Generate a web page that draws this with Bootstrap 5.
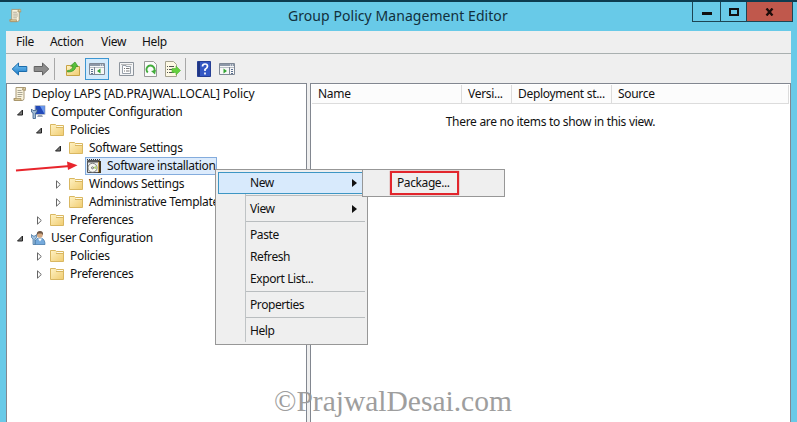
<!DOCTYPE html>
<html lang="en">
<head>
<meta charset="utf-8">
<meta name="viewport" content="width=device-width, initial-scale=1">
<title>Group Policy Management Editor</title>
<link href="https://cdn.jsdelivr.net/npm/bootstrap@5.3.0/dist/css/bootstrap.min.css" rel="stylesheet">
<style>
body{font-family:"Noto Sans","Open Sans",sans-serif;font-size:12px;line-height:18px;color:#111;background:#68cae8;letter-spacing:-.3px}
svg{display:block;flex:none}
.win{width:797px;height:422px;border-top:2px solid #0d3c50;padding:0 6px}
.titlebar{height:29px;padding-left:2px}
.title-ic{margin-top:6px}
.caption{font-size:14px;color:#12303c;letter-spacing:.06px;margin-left:265px;padding-bottom:1px}
.winbtns{width:101px;height:20px;margin-right:-2px;border:1px solid #1d4554;border-top:0}
.winbtns>div{border-right:1px solid #1d4554}
.winbtns>div:last-child{border:0;background:#c0584c}
.b1{width:28px}.b2{width:26px}
.menubar{height:23px;background:#efefef;border-bottom:1px solid #a9b0b0;padding:0 0 0 10px}
.toolbar{height:29px;background:#efefef;padding-left:5px}
.tsep{width:1px;height:22px;background:#a8a8a8}
.toggled{width:24px;height:22px;background:#d3eafb;border:1px solid #3c96d2}
.panes{height:339px;background:#efefef;gap:3px}
.tree{width:301px;background:#fff;border:1px solid #828790;border-bottom:0;padding:1px 0 0 5px}
.list-pane{background:#fff;border:1px solid #828790;border-bottom:0;padding:1px 1px 0 1px}
.node{height:18px;white-space:nowrap}
.root-lbl{letter-spacing:-.12px}
.node .tw{width:9px}
.node .ic{width:16px}
.node .tw+.ic{margin:0 5px 0 5px}
.root-ic{margin-right:4px}
.l2{padding-left:19px}.l3{padding-left:38px}.l4{padding-left:73px}
.picked{height:18px;width:132px;background:#dcebfc;border:1px solid #84acdd}
.picked span{margin-left:5px;letter-spacing:-.33px}
.cols{height:19px;border-bottom:1px solid #dcdcdc;background:#fcfcfc}
.cols>div{border-right:1px solid #dcdcdc;padding-left:6px}
.c1{width:150px}.c2{width:50px}.c3{width:100px}
.empty{padding-top:9px}
.ctx{left:215px;top:169px;width:153px;height:176px;background:#efefef;border:1px solid #979797;padding:2px;letter-spacing:-.42px}
.ctx .gutter{left:29px;top:24px;bottom:2px;width:1px;background:#bfc3c5}
.mi{height:22px;padding-left:32px;padding-right:8px}
.mi.on{background:#d8eafc;border:1px solid #3d96c4;padding-left:31px;padding-right:7px}
.ms{height:4px;padding:1px 0 0 28px}
.ms::before{content:"";display:block;height:1px;background:#b9bdbf}
.sub{left:362px;top:169px;width:143px;height:28px;background:#efefef;border:1px solid #979797;padding:1px 0 0 27px}
.hot{width:69px;height:24px;border:2px solid #e2252c;box-shadow:0 0 1px #b44;padding-left:5px;letter-spacing:-.4px}
.pointer{left:14px;top:157px}
.stamp{left:274px;top:382px;font:29.5px/38px "Liberation Serif",serif;color:#999;letter-spacing:0;opacity:.95;white-space:nowrap}
</style>
<script src="https://cdn.jsdelivr.net/npm/bootstrap@5.3.0/dist/js/bootstrap.bundle.min.js"></script>
</head>
<body class="overflow-hidden">
<svg width="0" height="0" class="position-absolute">
<defs>
<linearGradient id="gf" x2="1" y2="1"><stop stop-color="#fff2c4"/><stop offset="1" stop-color="#f0cc70"/></linearGradient>
<linearGradient id="gb" x2="0" y2="1"><stop stop-color="#7cc8f4"/><stop offset="1" stop-color="#1878c8"/></linearGradient>
<symbol id="folder" viewBox="0 0 16 16"><path d="M1.500 13.500V2.500h5l1 1h7v10z" fill="url(#gf)" stroke="#d9b761"/><path d="M7 5.500h7.500" stroke="#d9b761"/><path d="M8 4.500h6" stroke="#fffbe8"/></symbol>
<symbol id="scroll" viewBox="0 0 16 16"><path d="M4 1.500h9.500v2.500H12v8.500q0 2-2 2H2v-2h2z" fill="#faf4df" stroke="#a99a78"/><path d="M12 1.500q-1.500 0-1.500 2.500H14" fill="#d8c79b" stroke="#a08c60" stroke-width=".8"/><path d="M5.500 4.500h4M5.500 6.500h5M5.500 8.500h5M5.500 10.500h4" stroke="#a9a594"/><path d="M2 12.500h7v2H3z" fill="#dcc894" stroke="#a08c60" stroke-width=".7"/></symbol>
<symbol id="open" viewBox="0 0 9 9"><path d="M6.500 2v5h-5z" fill="#777" stroke="#222"/></symbol>
<symbol id="shut" viewBox="0 0 9 9"><path d="M2.500.800v7.400L6.300 4.500z" fill="#fff" stroke="#666"/></symbol>
<symbol id="pc" viewBox="0 0 16 16"><path d="M5 1.500h10v9H5z" fill="#2249b8" stroke="#b9c1ce"/><path d="M10 2h4.500v8z" fill="#6796ee"/><path d="M8 11h4l1 2H7z" fill="#9aa5b5"/><path d="M1.500 5v3l1.500 1v5.500h2.500V9L7 8V5L5.500 6.500H3z" fill="#9fb9d4" stroke="#3c5f88" stroke-width=".8"/></symbol>
<symbol id="user" viewBox="0 0 16 16"><path d="M5 14.500q-.5-6 4-6.500h2q4 1 4 6.500z" fill="#75aadc" stroke="#477cac" stroke-width=".8"/><path d="M8 8.500l2 3 2-3z" fill="#fff"/><circle cx="9.800" cy="4.800" r="3" fill="#d5a982"/><path d="M6.800 5Q6.500 1 10 1t3 4L11.500 3.500H8.500z" fill="#6d5747"/><path d="M1.500 4.500v3L3 9v5.500h2V9l1.500-1.500v-3L5 6H3z" fill="#9fc0de" stroke="#3c6f9c" stroke-width=".7"/></symbol>
<symbol id="inst" viewBox="0 0 16 16"><path d="M1.500 2.500h12v12h-12z" fill="#e8e8e8" stroke="#555"/><path d="M1 1.500h14" stroke="#333" stroke-dasharray="1 1"/><path d="M1 3h12v1.500H1z" fill="#555"/><path d="M12 3h3v12h-3z" fill="#443722"/><path d="M12 4h1v10h-1z" fill="#c9a350"/><circle cx="6.500" cy="9.800" r="4.500" fill="#f8f8f2" stroke="#666" stroke-width=".8"/><path d="M6.500 9.800l4-2v3.500z" fill="#b4d878"/><circle cx="6.500" cy="9.800" r="1" fill="#fff" stroke="#555" stroke-width=".8"/></symbol>
<symbol id="arr" viewBox="0 0 16 16"><path d="M.7 8L7 2v3.500h8.300v5H7V14z"/></symbol>
<symbol id="pane" viewBox="0 0 16 16"><path d="M.5 2.500h15v11H.5z" fill="#f7f7f7" stroke="#7f8895"/><path d="M1 3h14v2H1z" fill="#8d98a8"/><path d="M11 4h1m1 0h1" stroke="#fff"/><path d="M1 6.500h14" stroke="#b8bec6"/></symbol>
</defs></svg>

<div class="win">
  <!-- title bar -->
  <div class="titlebar d-flex align-items-start">
    <svg width="15" height="15" class="title-ic"><use href="#scroll"/></svg>
    <div class="caption align-self-center me-auto">Group Policy Management Editor</div>
    <div class="winbtns d-flex">
      <div class="b1 d-flex align-items-center justify-content-center"><svg width="10" height="4" class="mt-1"><path d="M0 0h10v3H0z" fill="#111"/></svg></div>
      <div class="b2 d-flex align-items-center justify-content-center"><svg width="10" height="8"><path d="M1 1h8v6H1z" fill="none" stroke="#111" stroke-width="2"/></svg></div>
      <div class="flex-fill d-flex align-items-center justify-content-center"><svg width="9" height="8"><path d="M1.500.500l6 7M7.500.500l-6 7" stroke="#1d0c0a" stroke-width="2.300"/></svg></div>
    </div>
  </div>
  <!-- menu bar -->
  <div class="menubar d-flex align-items-center"><span style="width:34px">File</span><span style="width:51px">Action</span><span style="width:41px">View</span><span>Help</span></div>
  <!-- toolbar -->
  <div class="toolbar d-flex align-items-center">
    <svg width="17" height="16"><use href="#arr" fill="url(#gb)" stroke="#1b6cab"/></svg>
    <svg width="17" height="16" style="margin-left:5px"><use href="#arr" transform="matrix(-1 0 0 1 17 0)" fill="#8c8c8c" stroke="#626262"/></svg>
    <div class="tsep" style="margin-left:4px"></div>
    <svg width="16" height="16" viewBox="0 0 16 16" style="margin-left:10px"><path d="M1.500 14.500V4.500h4l1 1h8v9z" fill="url(#gf)" stroke="#c7a244"/><path d="M2.500 9.500Q7 9.500 8 5H5.500l4.500-4 3 4.500h-2q-1 5.500-8.500 5.500z" fill="#58c03c" stroke="#3b9428" stroke-width=".7"/></svg>
    <div class="toggled d-flex align-items-center justify-content-center" style="margin-left:4px"><svg width="16" height="16" viewBox="0 0 16 16"><use href="#pane"/><path d="M5.500 6v8" stroke="#7f8895"/><path d="M2 8.500h2M2 10.500h2M2 12.500h2" stroke="#5a7090"/><path d="M11.500 7.500v5L8 10z" fill="#32a532"/></svg></div>
    <svg width="16" height="16" viewBox="0 0 16 16" style="margin-left:10px"><path d="M.5 1.500h14v13H.500z" fill="#f4f5f6" stroke="#8d949c"/><path d="M3.500 6v6.500h8V5.500H7v-1H3.500z" fill="#fff" stroke="#99a1aa"/><path d="M2 3.500h11" stroke="#bbb"/><path d="M5 7.500h1m1 0h3.500M5 10h1m1 0h3.500" stroke="#777"/></svg>
    <svg width="16" height="16" viewBox="0 0 16 16" style="margin-left:8px"><path d="M1.500.500h9l3 3v12h-12z" fill="#fbfbfb" stroke="#999"/><path d="M4.800 11.500A4 4 0 1 1 10.700 11" fill="none" stroke="#43ac3c" stroke-width="2"/><path d="M8 10l5-1-1 4.500z" fill="#43ac3c"/></svg>
    <svg width="17" height="16" viewBox="0 0 17 16" style="margin-left:5px"><path d="M1.500.500h8l3 3v12h-11z" fill="#fdf9e4" stroke="#a5a28f"/><path d="M3 5.500h1m1 0h5M3 8.500h1m1 0h5M3 11.500h1m1 0h5" stroke="#555"/><path d="M8 7.500h4V5l4.500 4.500L12 14v-2.500H8z" fill="#65d13f" stroke="#52b232" stroke-width=".6"/></svg>
    <div class="tsep" style="margin-left:4px"></div>
    <svg width="14" height="16" viewBox="0 0 14 16" style="margin-left:11px"><path d="M.5.500h13v15H.500z" fill="#3458c4" stroke="#263f94"/><path d="M1 1h2v14H1z" fill="#203684"/><path d="M5.500 5.500Q5.500 3 8 3t2.500 2.300Q10.500 7 8 8.500V10M8 11.500v2" stroke="#fff" stroke-width="1.700" fill="none"/></svg>
    <svg width="16" height="16" viewBox="0 0 16 16" style="margin-left:8px"><use href="#pane"/><path d="M10.500 6v8" stroke="#7f8895"/><path d="M12 8.500h2M12 10.500h2M12 12.500h2" stroke="#5a7090"/><path d="M4.500 7.500v5L8 10z" fill="#32a532"/></svg>
  </div>
  <!-- tree and list -->
  <div class="panes d-flex">
    <div class="tree overflow-hidden">
      <div class="node d-flex align-items-center"><svg class="ic root-ic" height="16"><use href="#scroll"/></svg><span class="root-lbl">Deploy LAPS [AD.PRAJWAL.LOCAL] Policy</span></div>
      <div class="node l1 d-flex align-items-center"><svg class="tw ms-1" height="9"><use href="#open"/></svg><svg class="ic" height="16"><use href="#pc"/></svg><span>Computer Configuration</span></div>
      <div class="node l2 d-flex align-items-center"><svg class="tw ms-1" height="9"><use href="#open"/></svg><svg class="ic" height="16"><use href="#folder"/></svg><span>Policies</span></div>
      <div class="node l3 d-flex align-items-center"><svg class="tw ms-1" height="9"><use href="#open"/></svg><svg class="ic" height="16"><use href="#folder"/></svg><span>Software Settings</span></div>
      <div class="node l4 d-flex align-items-center"><div class="picked d-flex align-items-center"><svg class="ic" height="16"><use href="#inst"/></svg><span>Software installation</span></div></div>
      <div class="node l3 d-flex align-items-center"><svg class="tw ms-1" height="9"><use href="#shut"/></svg><svg class="ic" height="16"><use href="#folder"/></svg><span>Windows Settings</span></div>
      <div class="node l3 d-flex align-items-center"><svg class="tw ms-1" height="9"><use href="#shut"/></svg><svg class="ic" height="16"><use href="#folder"/></svg><span>Administrative Templates</span></div>
      <div class="node l2 d-flex align-items-center"><svg class="tw ms-1" height="9"><use href="#shut"/></svg><svg class="ic" height="16"><use href="#folder"/></svg><span>Preferences</span></div>
      <div class="node l1 d-flex align-items-center"><svg class="tw ms-1" height="9"><use href="#open"/></svg><svg class="ic" height="16"><use href="#user"/></svg><span>User Configuration</span></div>
      <div class="node l2 d-flex align-items-center"><svg class="tw ms-1" height="9"><use href="#shut"/></svg><svg class="ic" height="16"><use href="#folder"/></svg><span>Policies</span></div>
      <div class="node l2 d-flex align-items-center"><svg class="tw ms-1" height="9"><use href="#shut"/></svg><svg class="ic" height="16"><use href="#folder"/></svg><span>Preferences</span></div>
    </div>
    <div class="list-pane flex-fill">
      <div class="cols d-flex"><div class="c1">Name</div><div class="c2">Versi...</div><div class="c3">Deployment st...</div><div class="flex-fill">Source</div></div>
      <div class="empty text-center">There are no items to show in this view.</div>
    </div>
  </div>
</div>

<!-- context menu and its submenu -->
<div class="ctx position-absolute">
  <div class="gutter position-absolute"></div>
  <div class="mi on d-flex align-items-center justify-content-between position-relative">New<svg width="5" height="8"><path d="M0 0v8l5-4z" fill="#111"/></svg></div>
  <div class="ms"></div>
  <div class="mi d-flex align-items-center justify-content-between">View<svg width="5" height="8"><path d="M0 0v8l5-4z" fill="#111"/></svg></div>
  <div class="ms"></div>
  <div class="mi d-flex align-items-center">Paste</div>
  <div class="mi d-flex align-items-center">Refresh</div>
  <div class="mi d-flex align-items-center">Export List...</div>
  <div class="ms"></div>
  <div class="mi d-flex align-items-center">Properties</div>
  <div class="ms"></div>
  <div class="mi d-flex align-items-center">Help</div>
</div>
<div class="sub position-absolute"><div class="hot d-flex align-items-center">Package...</div></div>
<svg class="pointer position-absolute" width="66" height="16"><path d="M2 13.500L56 9" stroke="#e8252c" stroke-width="1.800"/><path d="M53 4.500l10.500 3.800L54 13z" fill="#e8252c"/></svg>
<div class="stamp position-absolute">©PrajwalDesai.com</div>
</body>
</html>
